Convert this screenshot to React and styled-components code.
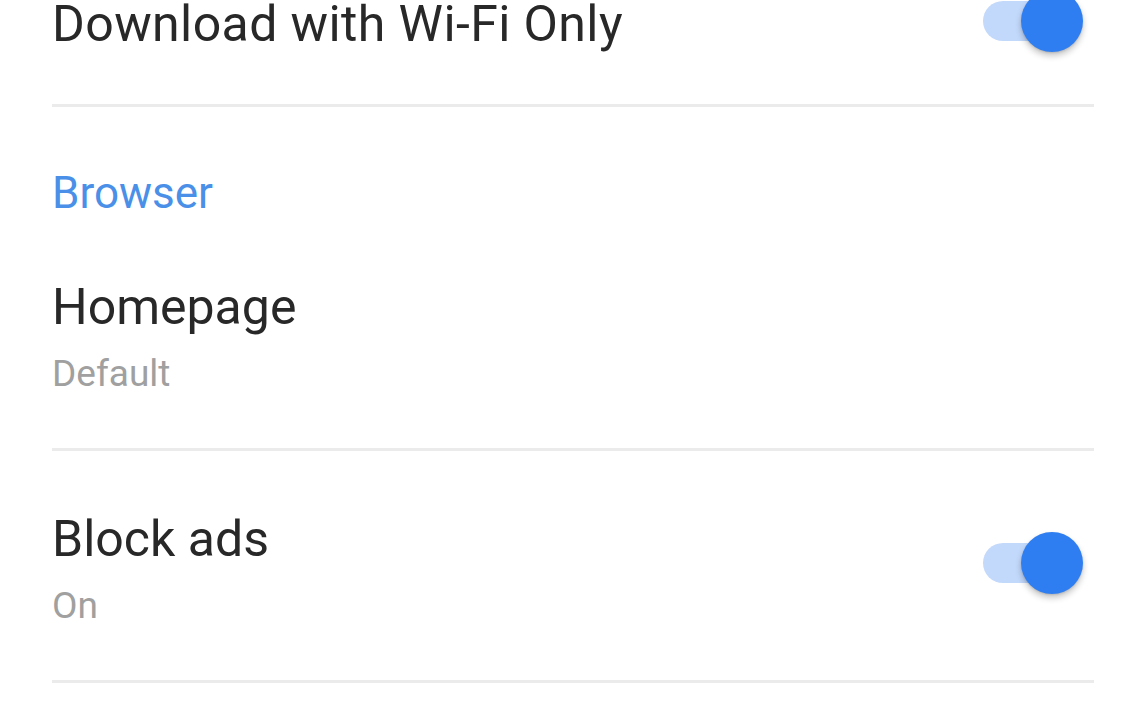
import React from "react";
import styled, { createGlobalStyle } from "styled-components";

const Global = createGlobalStyle`
  html, body { margin: 0; padding: 0; background: #ffffff; }
  body { font-family: Roboto, "Noto Sans", sans-serif; overflow: hidden; }
`;

const Page = styled.div`
  width: 1146px;
  height: 716px;
  overflow: hidden;
  background: #ffffff;
`;

const List = styled.div`
  display: flex;
  flex-direction: column;
  margin: -66px 52px 0 52px;
`;

const Row = styled.div`
  display: flex;
  align-items: center;
  justify-content: space-between;
  padding: ${(p) => (p.$compact ? "61px 0 51px" : "59px 0 52px")};
  border-bottom: 3px solid #ebebeb;
`;

const Texts = styled.div`
  display: flex;
  flex-direction: column;
`;

const Title = styled.div`
  font-size: 50px;
  line-height: 58px;
  color: #282828;
  letter-spacing: ${(p) => (p.$wide ? "0.4px" : "0")};
`;

const Subtitle = styled.div`
  margin-top: 16px;
  font-size: 37px;
  line-height: 44px;
  color: #a0a0a0;
`;

const SectionHeader = styled.div`
  margin-top: 61px;
  margin-bottom: 1px;
  font-size: 44px;
  line-height: 50px;
  color: #4a8fe8;
`;

/* Toggle box is as tall as a title line; the knob overhangs it. */
const ToggleWrap = styled.div`
  position: relative;
  width: 100px;
  height: 58px;
  margin-right: 11px;
  flex-shrink: 0;
`;

const Track = styled.div`
  position: absolute;
  left: 0;
  top: ${(p) => 9 + p.$shift}px;
  width: 77px;
  height: 40px;
  border-radius: 20px;
  background: ${(p) => (p.$on ? "#c3d9fb" : "#d6d6d6")};
`;

const Thumb = styled.div`
  position: absolute;
  top: ${(p) => -2 + p.$shift}px;
  ${(p) => (p.$on ? "right: 0;" : "left: 0;")}
  width: 62px;
  height: 62px;
  border-radius: 50%;
  background: ${(p) => (p.$on ? "#2f7ef1" : "#f5f5f5")};
  box-shadow: 0 4px 6px rgba(0, 0, 0, 0.22), 0 1px 2px rgba(0, 0, 0, 0.12);
`;

const Toggle = ({ on, shift = 0 }) => (
  <ToggleWrap>
    <Track $on={on} $shift={shift} />
    <Thumb $on={on} $shift={shift} />
  </ToggleWrap>
);

export default function App() {
  return (
    <Page>
      <Global />
      <List>
        <Row $compact>
          <Texts>
            <Title $wide>Download with Wi-Fi Only</Title>
          </Texts>
          <Toggle on shift={-3} />
        </Row>
        <SectionHeader>Browser</SectionHeader>
        <Row>
          <Texts>
            <Title>Homepage</Title>
            <Subtitle>Default</Subtitle>
          </Texts>
        </Row>
        <Row>
          <Texts>
            <Title>Block ads</Title>
            <Subtitle>On</Subtitle>
          </Texts>
          <Toggle on shift={-6} />
        </Row>
      </List>
    </Page>
  );
}
